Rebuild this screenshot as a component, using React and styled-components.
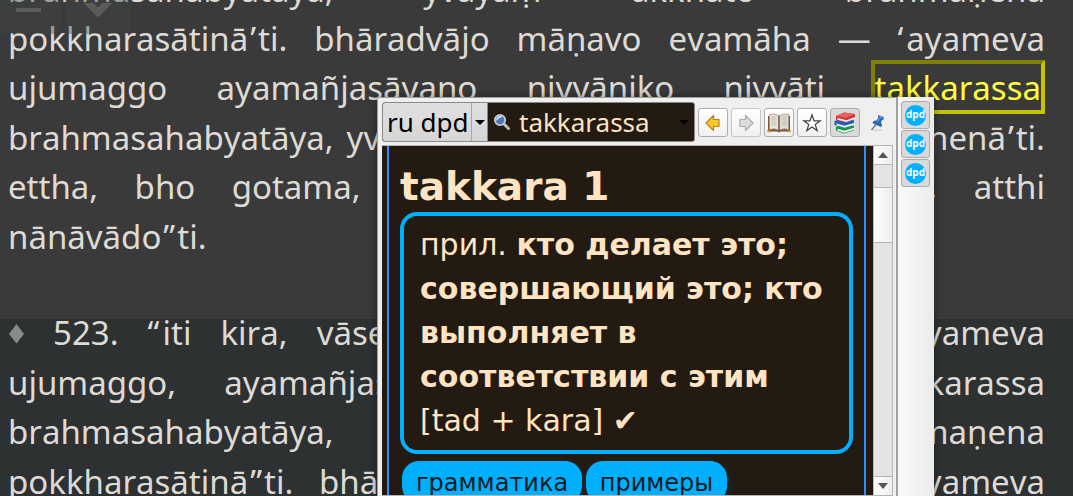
import React from 'react';
import styled, { createGlobalStyle } from 'styled-components';

const Global = createGlobalStyle`
  * { box-sizing: border-box; }
  html, body { margin: 0; height: 100%; overflow: hidden; background: #2d3132; }
`;

const Page = styled.main`
  position: relative;
  width: 1073px;
  height: 496px;
  overflow: hidden;
  font: 33px/49.6px "Noto Sans", sans-serif;
  font-kerning: none;
  color: #dedad5;
`;
const Paragraph = styled.section`
  height: ${p => p.$height}px;
  padding: 0 28px 0 8px;
  background: ${p => p.$bg};
  display: flex;
  flex-direction: column;
  justify-content: ${p => p.$align};
`;
const Line = styled.div`
  flex: none;
  height: ${p => (p.$short ? 48.6 : 49.6)}px;
  display: flex;
  justify-content: ${p => (p.$last ? 'flex-start' : 'space-between')};
  white-space: nowrap;
`;
const Spacer = styled.div`
  flex: none;
  height: ${p => p.$h}px;
  margin-top: ${p => p.$pull || 0}px;
`;
const Quote = styled.span`
  padding: ${p => (p.$open ? '0 3px 0 0' : '0 2px')};
`;
const Found = styled.mark`
  background: none;
  color: #ffff3c;
  height: 54px;
  line-height: 48px;
  margin: -3px 0 0 -4px;
  border: 4px solid;
  border-color: #808000 #c4c400 #c4c400 #808000;
`;
const Diamond = styled.span`
  color: #8a8a88;
  display: flex;
  align-items: center;
`;

const PageButtons = styled.nav`
  position: absolute;
  left: 0;
  top: 0;
  display: flex;
  gap: 4px;
`;
const PageButton = styled.div`
  width: ${p => p.$w}px;
  height: 34px;
  border-radius: 0 0 5px 5px;
  background: rgba(65, 72, 70, 0.4);
`;

const Popup = styled.aside`
  position: absolute;
  left: 377px;
  top: 97px;
  width: 557px;
  height: 399px;
  display: flex;
  background: #efefef;
  box-shadow: 0 0 9px rgba(0, 0, 0, 0.4);
  color: #ffe4c4;
`;
const MainPane = styled.div`
  width: 521px;
  border: solid #a0a0a0;
  border-width: 1px 2px 0 1px;
  padding: 4px 3px 0 4px;
`;
const Toolbar = styled.div`
  display: flex;
  align-items: center;
  height: 40px;
`;
const SearchBox = styled.div`
  display: flex;
  width: 313px;
  height: 40px;
  border: 1px solid #888;
  border-radius: 3px;
  overflow: hidden;
  background: #231a11;
  font: 26px/38px "Noto Sans", sans-serif;
`;
const Group = styled.div`
  display: flex;
  flex: none;
  width: 105px;
  color: #000;
  background: linear-gradient(#e0e0e0, #d6d6d6);
  border-right: 1px solid #888;
`;
const GroupName = styled.div`
  flex: none;
  width: 89px;
  padding-left: 4px;
  border-right: 1px solid #a5a5a5;
  white-space: nowrap;
`;
const Caret = styled.i`
  align-self: center;
  border: solid transparent;
  border-width: 5px 5px 0;
  border-top-color: #000;
  margin: ${p => p.$m};
`;
const Query = styled.div`
  flex: 1;
  display: flex;
  align-items: center;
  padding-left: 5px;
  gap: 8px;
`;
const Tools = styled.div`
  display: flex;
  gap: 3px;
  margin: 1px 0 0 3px;
`;
const Tool = styled.button`
  width: 30px;
  height: 29px;
  padding: 0;
  display: grid;
  place-items: center;
  border: 1px solid ${p => (p.$flat ? 'transparent' : p.$dim ? '#c6c6c6' : '#adadad')};
  border-radius: 3px;
  background: ${p => (p.$flat ? 'none' : p.$on ? '#dadada' : 'linear-gradient(#fff, #f0f0f0)')};
`;
const Viewport = styled.div`
  display: flex;
  height: 351px;
  margin-top: 3px;
  border: solid #b4b4b4;
  border-width: 1px 1px 1px 0;
`;
const Article = styled.article`
  width: 491px;
  height: 349px;
  overflow: hidden;
  background: #231a11;
  padding: 0 7px 0 5px;
  font-family: "DejaVu Sans", sans-serif;
`;
const Entry = styled.div`
  height: 349px;
  border: solid #3090ff;
  border-width: 0 2px;
  padding: 19px 11px 0;
`;
const Title = styled.h1`
  margin: 0;
  font-size: 39px;
  line-height: 44px;
`;
const Meaning = styled.div`
  margin-top: 3px;
  height: 242px;
  border: 4px solid #00b0ff;
  border-radius: 17px;
  padding: 7px 0 0 16px;
  font-size: 30px;
  line-height: 44px;
  white-space: nowrap;
`;
const Chips = styled.div`
  display: flex;
  gap: 4px;
  padding: 7px 0 0 2px;
`;
const Chip = styled.div`
  flex: none;
  width: ${p => p.$w}px;
  height: 42px;
  border-radius: 17px;
  background: #00b0ff;
  color: #0c1a22;
  font-size: 24px;
  line-height: 44px;
  text-align: center;
  box-shadow: 2px 2px 8px rgba(0, 90, 140, 0.25);
`;
const Scrollbar = styled.div`
  width: 19px;
  background: #e4e4e4;
  display: flex;
  flex-direction: column;
  border-left: 1px solid #b8b8b8;
`;
const ScrollPart = styled.div`
  height: ${p => p.$h}px;
  margin-top: ${p => p.$mt || 0};
  background: linear-gradient(90deg, #fff, #eee);
  border: solid #b4b4b4;
  border-width: ${p => p.$bw};
  display: grid;
  place-items: center;
`;
const Arrow = styled.i`
  border: solid transparent;
  border-width: ${p => (p.$up ? '0 5px 6px' : '6px 5px 0')};
  border-top-color: ${p => (p.$up ? 'transparent' : '#555')};
  border-bottom-color: ${p => (p.$up ? '#555' : 'transparent')};
`;
const Dictionaries = styled.div`
  width: 36px;
  padding: 4px 0 0 3px;
  background: linear-gradient(90deg, #fafafa, #ebebeb);
`;
const Dictionary = styled.button`
  display: grid;
  place-items: center;
  width: 29px;
  height: 28px;
  margin: 0 0 1px;
  padding: 0;
  border: 1px solid #aaa;
  border-radius: 3px;
  background: #d9d9d9;
`;
const Badge = styled.span`
  display: flex;
  justify-content: center;
  width: 21px;
  height: 21px;
  border-radius: 50%;
  background: #00b0ff;
  color: #fff;
  font: bold 10px/19px "Open Sans", sans-serif;
`;

const Magnifier = () => (
  <svg width="18" height="18" viewBox="0 0 18 18">
    <path d="M10.5 10.5L15.500 15.500" stroke="#b9bcc2" strokeWidth="3" strokeLinecap="round" />
    <circle cx="7" cy="7" r="5.2" fill="#4c78b8" stroke="#c3cad4" strokeWidth="1.8" />
    <path d="M3.500 8a3.800 3.800 0 0 1 6-4.200C7.500 4.500 5 6 3.500 8z" fill="#c8dcf4" />
  </svg>
);
const ArrowIcon = ({ next }) => (
  <svg width="18" height="18" viewBox="0 0 18 18" transform={next ? 'scale(-1 1)' : undefined}>
    <path d="M2 9l7.500-7.500v4H15v7H9.500v4z" fill={next ? '#dcdcdc' : '#ffc52e'} stroke={next ? '#aaa' : '#b98518'} strokeWidth="1.2" strokeLinejoin="round" />
  </svg>
);
const BookIcon = () => (
  <svg width="24" height="20" viewBox="0 0 24 20">
    <path d="M1 3h22v15.500H14l-2 1-2-1H1z" fill="#7d5340" />
    <path d="M1 17v1.500h3M23 17v1.500h-3" stroke="#e0982c" strokeWidth="1.500" fill="none" />
    <path d="M2.500 1.500Q8 0 11.500 2.500V17Q7 15 2.500 16.500z" fill="#e9e3da" stroke="#a49588" strokeWidth=".8" />
    <path d="M21.500 1.500Q16 0 12.500 2.500V17Q17 15 21.500 16.500z" fill="#e4ddd3" stroke="#a49588" strokeWidth=".8" />
    <path d="M4 4h5.500M4 6h5.500M4 8h5.500M4 10h5.500M4 12h5.500M14.500 4H20M14.500 6H20M14.500 8H20M14.500 10H20M14.500 12H20" stroke="#bdb5aa" strokeWidth=".8" />
    <path d="M12 2.500V18" stroke="#766c60" strokeWidth="1.500" />
  </svg>
);
const StarIcon = () => (
  <svg width="20" height="20" viewBox="0 0 20 20">
    <path d="M10 1.800l2 6h6.300l-5.100 3.700 2 6.100L10 13.900l-5.200 3.700 2-6.100L1.700 7.800H8z" fill="#fff" stroke="#454545" strokeWidth="1.200" />
  </svg>
);
const BooksIcon = () => (
  <svg width="22" height="22" viewBox="0 0 22 22">
    <path d="M2 15l8-3 10 2v4.500L10 21.500 2 18.500z" fill="#159347" />
    <path d="M3.500 16.800l7 2 9.500-3v2l-9.500 3-7-2.300z" fill="#f4f4f4" />
    <path d="M.5 9L9 6l11 2.500V13l-10 3L.5 13z" fill="#1b62bd" />
    <path d="M2.500 11.500l8 2.200L20 11v2l-9.500 2.800-8-2.500z" fill="#eee" />
    <path d="M2 4l8-3.500 11 1.500v4.500L12 10.500 2 8z" fill="#d23438" />
    <path d="M3.500 6l9 2.200L21 5v1.800l-8.500 3.200-9-2.200z" fill="#f3f0ee" />
    <path d="M2 4L10 .5 21 2l-8.500 4z" fill="#ea5f5f" />
  </svg>
);
const PinIcon = () => (
  <svg width="16" height="18" viewBox="0 0 16 18">
    <path d="M3 16.200h9" stroke="#ccc" strokeWidth="1.200" />
    <path d="M1.500 15.800L6 10.500" stroke="#666" strokeWidth="1.200" />
    <path d="M8.500 1.500l5 2-.500 2-1.500.2-1 3.300 1.300 2-1 1.500L3 9l.8-1.700 2.500-.3L8.800 4z" fill="#246bc0" stroke="#164b91" strokeWidth=".7" />
    <path d="M9.500 2.700l3 1.300M7.500 7.500l1.800-3" stroke="#8bbcf0" strokeWidth="1" />
  </svg>
);

const first = [
  'brahmasahabyatāya, yvāyaṃ akkhāto brāhmaṇena',
  'pokkharasātinā’ti. bhāradvājo māṇavo evamāha — ‘ayameva',
  'ujumaggo ayamañjasāyano niyyāniko niyyāti *takkarassa',
  'brahmasahabyatāya, yvāyaṃ akkhāto brāhmaṇena tārukkhenā’ti.',
  'ettha, bho gotama, attheva viggaho, atthi vivādo, atthi',
  'nānāvādo”ti.',
];
const second = [
  '♦ 523. “iti kira, vāseṭṭha, tvaṃ evaṃ vadesi — ‘ayameva',
  'ujumaggo, ayamañjasāyano niyyāniko niyyāti takkarassa',
  'brahmasahabyatāya, yvāyaṃ akkhāto brāhmaṇena',
  'pokkharasātinā”ti. bhāradvājo māṇavo evamāha — ‘ayameva',
];

const Word = ({ text }) => {
  if (text === '♦') {
    return (
      <Diamond>
        <svg width="16" height="24" viewBox="0 0 16 24"><path d="M8.500 3L16 13 8.500 22.500 1 13z" fill="currentColor" /></svg>
      </Diamond>
    );
  }
  if (text[0] === '*') return <Found>{text.slice(1)}</Found>;
  return (
    <span>
      {text.split(/([‘’“”])/).map((part, i) => (
        i % 2 ? <Quote key={i} $open={'‘“'.includes(part)}>{part}</Quote> : part
      ))}
    </span>
  );
};
const Lines = ({ rows, shortFirst }) => rows.map((row, i) => (
  <Line key={i} $last={!row.includes(' ')} $short={shortFirst && i === 0}>
    {row.split(' ').map((w, j) => <Word key={j} text={w} />)}
  </Line>
));

export default function App() {
  return (
    <Page>
      <Global />
      <Paragraph $height={319} $bg="#3a3a3a" $align="flex-end">
        <Lines rows={first} shortFirst />
        <Spacer $h={57.4} />
      </Paragraph>
      <Paragraph $height={200} $bg="#2d3132" $align="flex-start">
        <Spacer $h={0} $pull={-11} />
        <Lines rows={second} />
      </Paragraph>
      <PageButtons>
        <PageButton $w={61}>
          <svg width="61" height="34"><path d="M16 7h25" stroke="#5b5b59" strokeWidth="4" /></svg>
        </PageButton>
        <PageButton $w={66}>
          <svg width="66" height="34"><path d="M19-4.500l14 14 14-14" fill="none" stroke="#5b5b59" strokeWidth="7" /></svg>
        </PageButton>
      </PageButtons>
      <Popup>
        <MainPane>
          <Toolbar>
            <SearchBox>
              <Group><GroupName>ru dpd</GroupName><Caret $m="0 0 0 3px" /></Group>
              <Query><Magnifier /><span>takkarassa</span><Caret $m="0 5px 0 auto" /></Query>
            </SearchBox>
            <Tools>
              <Tool><ArrowIcon /></Tool>
              <Tool $dim><ArrowIcon next /></Tool>
              <Tool><BookIcon /></Tool>
              <Tool><StarIcon /></Tool>
              <Tool $on><BooksIcon /></Tool>
              <Tool $flat><PinIcon /></Tool>
            </Tools>
          </Toolbar>
          <Viewport>
            <Article>
              <Entry>
                <Title>takkara 1</Title>
                <Meaning>
                  прил. <b>кто делает это;<br />совершающий это; кто<br />выполняет в<br />соответствии с этим</b><br />[tad + kara] ✔
                </Meaning>
                <Chips><Chip $w={180}>грамматика</Chip><Chip $w={141}>примеры</Chip></Chips>
              </Entry>
            </Article>
            <Scrollbar>
              <ScrollPart $h={19} $bw="0 0 1px"><Arrow $up /></ScrollPart>
              <ScrollPart $h={56} $mt="22px" $bw="1px 0" />
              <ScrollPart $h={19} $mt="auto" $bw="1px 0 0"><Arrow /></ScrollPart>
            </Scrollbar>
          </Viewport>
        </MainPane>
        <Dictionaries>
          {[0, 1, 2].map(i => <Dictionary key={i}><Badge>dpd</Badge></Dictionary>)}
        </Dictionaries>
      </Popup>
    </Page>
  );
}
